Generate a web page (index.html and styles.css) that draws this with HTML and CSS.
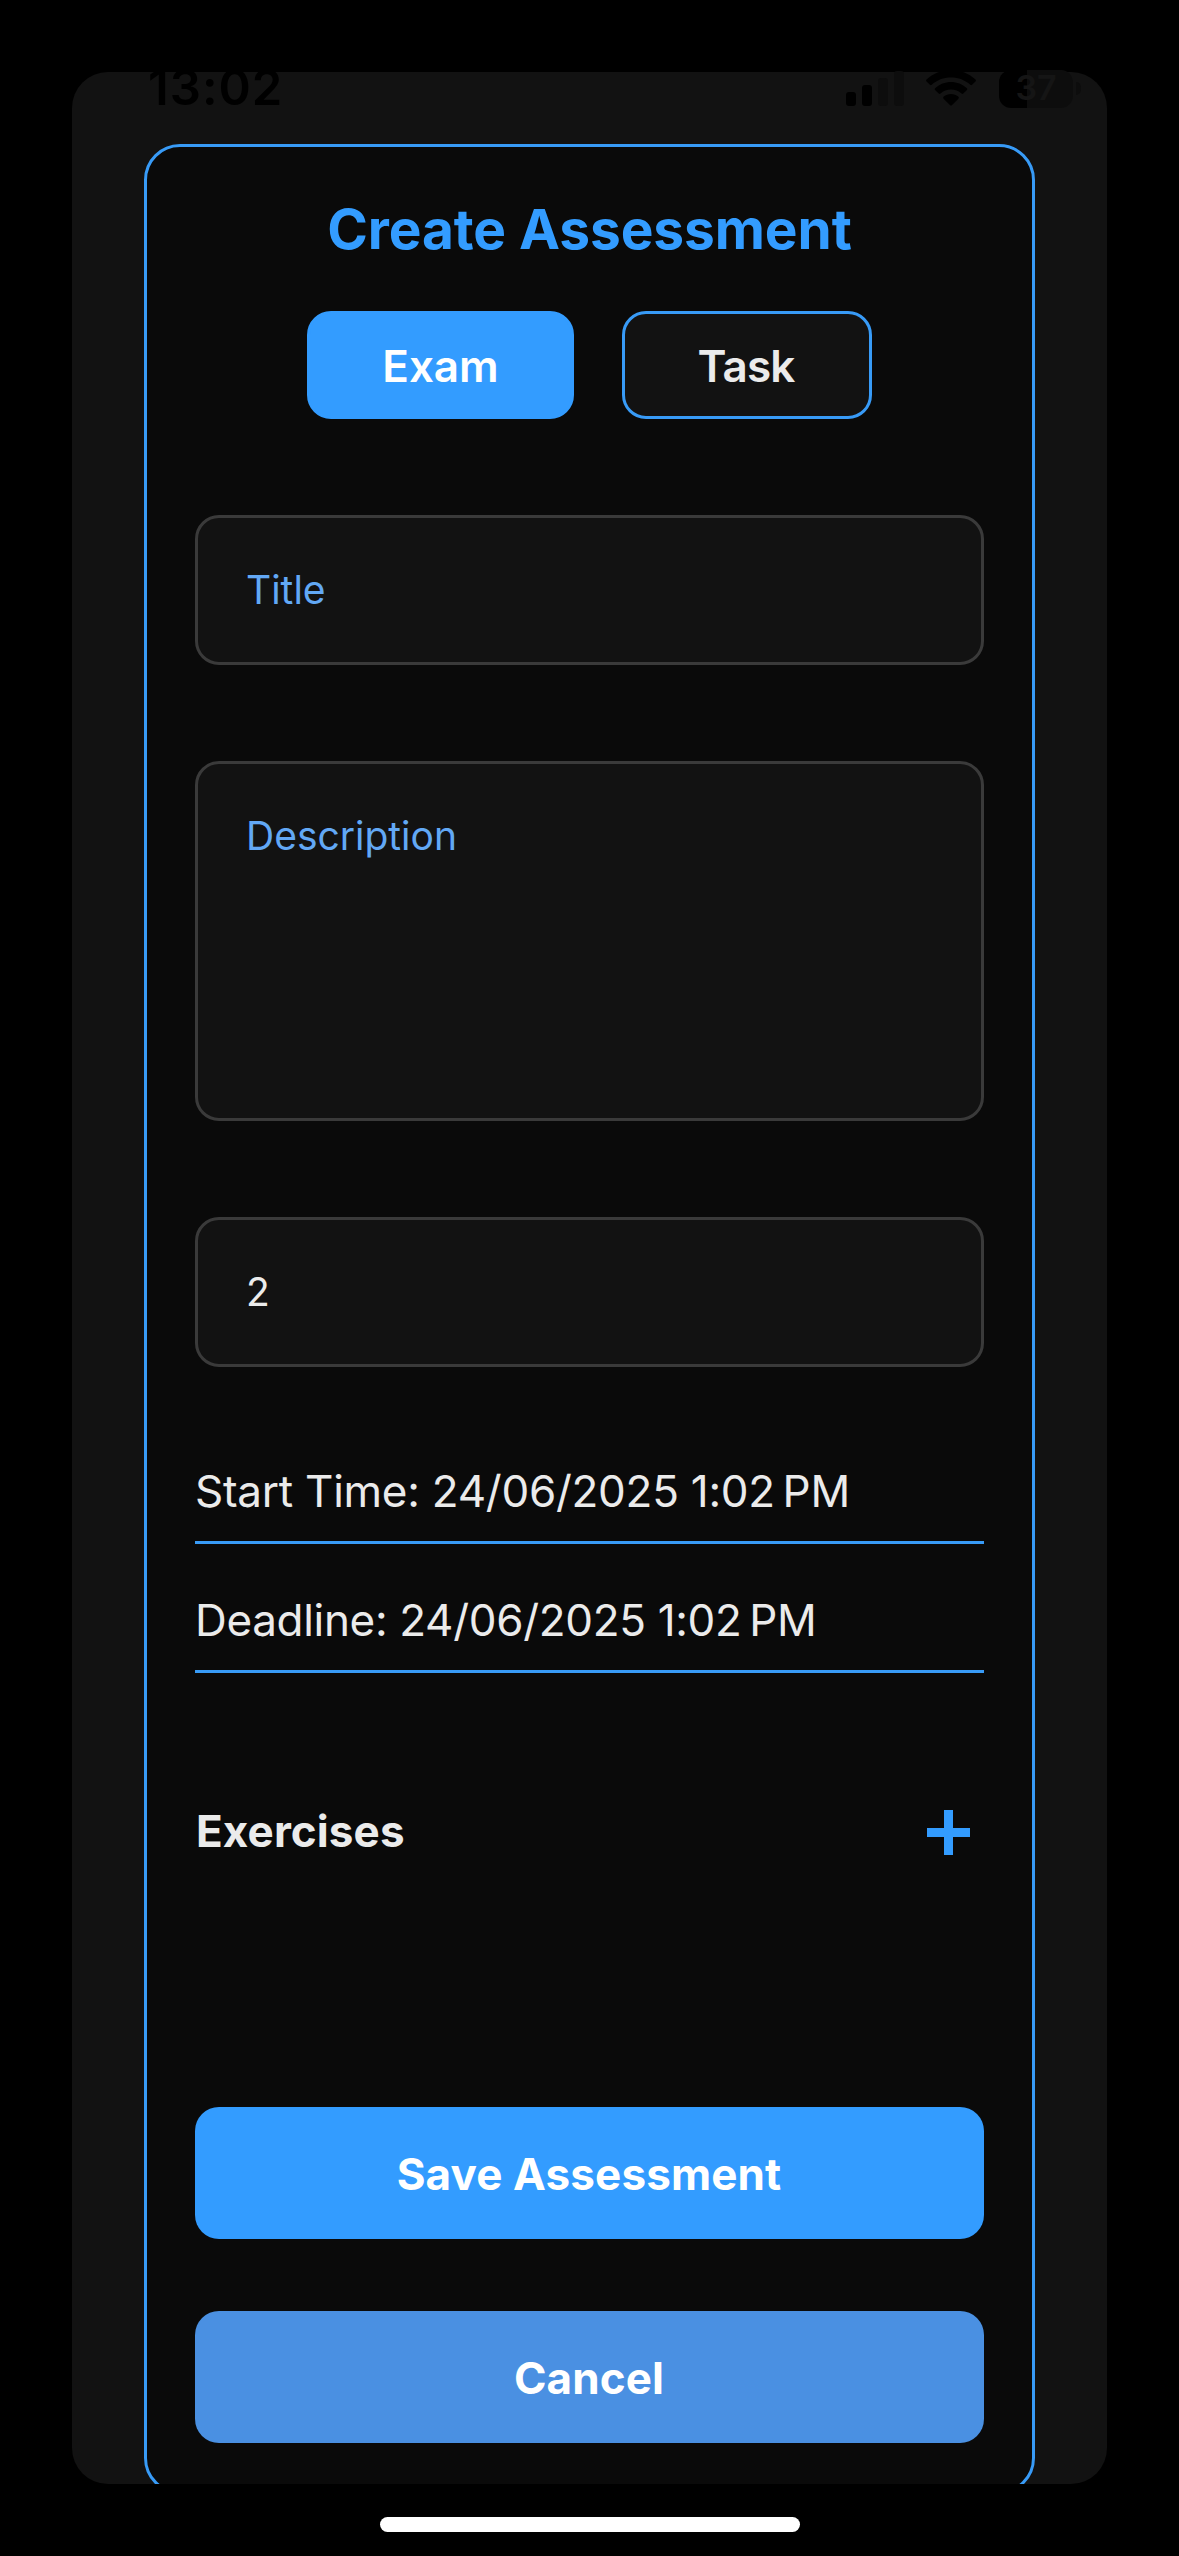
FILE: index.html
```html
<!DOCTYPE html>
<html lang="en">
<head>
<meta charset="utf-8">
<title>Create Assessment</title>
<link rel="stylesheet" href="styles.css">
</head>
<body>
<div class="screen">
  <main class="modal">
    <form class="card">
      <h1 class="heading">Create Assessment</h1>
      <div class="types">
        <button type="button" class="type type-active">Exam</button>
        <button type="button" class="type type-task">Task</button>
      </div>
      <div class="field placeholder">Title</div>
      <div class="field field-area placeholder">Description</div>
      <div class="field">2</div>
      <div class="dates">
        <div class="date">Start Time: 24/06/2025 1:02&#8239;PM</div>
        <div class="date date-deadline">Deadline: 24/06/2025 1:02&#8239;PM</div>
      </div>
      <div class="exercises">
        <h2 class="subheading">Exercises</h2>
        <svg class="plus" viewBox="0 0 43 45" aria-label="Add exercise"><path d="M17 0h9v18h17v9H26v18h-9V27H0v-9h17z"/></svg>
      </div>
      <div class="actions">
        <button type="button" class="action">Save Assessment</button>
        <button type="button" class="action action-cancel">Cancel</button>
      </div>
    </form>
  </main>
  <header class="status">
    <span class="time">13:02</span>
    <div class="indicators">
      <svg class="signal" viewBox="0 0 60 36">
        <rect x="0" y="22" width="10" height="14" rx="3"/>
        <rect x="16" y="15" width="10" height="21" rx="3"/>
        <rect class="dim" x="32" y="8" width="10" height="28" rx="3"/>
        <rect class="dim" x="48" y="1" width="10" height="35" rx="3"/>
      </svg>
      <svg class="wifi" viewBox="0 0 50 36">
        <path d="M25 0C15.500 0 6.800 3.600.500 9.600q-.800.900 0 1.800l3.400 3.400q.900.800 1.800 0C10.900 10 17.600 7.500 25 7.500s14.100 2.500 19.300 7.300q.900.800 1.800 0l3.400-3.400q.800-.900 0-1.800C43.200 3.600 34.500 0 25 0z"/>
        <path d="M25 12c-6 0-11.500 2.300-15.600 6-.900.800-.900 1.400-.100 2.200l3.400 3.300q.900.800 1.800 0c2.800-2.500 6.500-4 10.500-4s7.700 1.500 10.500 4q.900.800 1.800 0l3.400-3.300c.800-.800.800-1.400-.100-2.200C36.500 14.300 31 12 25 12z"/>
        <path d="M25 24c-2.800 0-5.300 1-7.200 2.600-.900.800-.800 1.500 0 2.300l6.100 6.200q1.100 1 2.200 0l6.100-6.200c.800-.8.900-1.500 0-2.300C30.300 25 27.800 24 25 24z"/>
      </svg>
      <div class="battery"><span class="level">37</span></div>
      <span class="nub"></span>
    </div>
  </header>
  <div class="home"></div>
</div>
</body>
</html>
```
FILE: styles.css
```css
* { box-sizing: border-box; }

body {
  margin: 0;
  background: #000;
  font-family: Inter, "Liberation Sans", sans-serif;
  color: #ebebeb;
}

.screen {
  position: relative;
  width: 1179px;
  height: 2556px;
  padding: 72px;
  overflow: hidden;
  background: #000;
}

.modal {
  height: 2412px;
  padding: 72px;
  overflow: hidden;
  border-radius: 36px;
  background: #121212;
}

.card {
  display: flex;
  flex-direction: column;
  width: 891px;
  height: 2350px;
  padding: 48px;
  border: 3px solid #389bf7;
  border-radius: 36px;
  background: #0a0a0a;
}

.heading {
  margin: 0;
  font-size: 55px;
  line-height: 68px;
  font-weight: 700;
  letter-spacing: -0.1px;
  text-align: center;
  color: #339cff;
}

.types {
  display: flex;
  justify-content: center;
  gap: 48px;
  margin-top: 48px;
}

.type {
  width: 250px;
  height: 108px;
  padding: 1px 0 0;
  border: 3px solid #389bf7;
  border-radius: 24px;
  background: #121212;
  font: 600 44px/54px Inter, "Liberation Sans", sans-serif;
  color: #ebebeb;
}

.type-active {
  width: 267px;
  border-color: #339cff;
  background: #339cff;
  color: #fff;
}

.type-task { padding-right: 2px; letter-spacing: -0.8px; }

.field {
  height: 150px;
  margin-top: 96px;
  padding: 47px 48px;
  border: 3px solid #3a3a3a;
  border-radius: 24px;
  background: #121212;
  font-size: 39px;
  line-height: 50px;
}

.field-area { height: 360px; }

.placeholder { color: #62a8f5; }

.dates {
  display: flex;
  flex-direction: column;
  gap: 49px;
  margin-top: 97px;
}

.date {
  padding-bottom: 23px;
  border-bottom: 3px solid #389bf7;
  font-size: 44px;
  line-height: 54px;
  letter-spacing: -0.26px;
  white-space: nowrap;
}

.date-deadline { letter-spacing: -0.32px; }

.exercises {
  display: flex;
  justify-content: space-between;
  height: 55px;
  margin-top: 132px;
  padding: 0 14px 0 1px;
}

.subheading {
  margin: 0;
  font-size: 44px;
  line-height: 52px;
  font-weight: 700;
  letter-spacing: 0.1px;
}

.plus {
  width: 43px;
  height: 45px;
  margin-top: 5px;
  fill: #339cff;
}

.actions {
  display: flex;
  flex-direction: column;
  gap: 72px;
  margin-top: 247px;
}

.action {
  height: 132px;
  padding: 1px 1px 0 0;
  border: 0;
  border-radius: 24px;
  background: #339cff;
  font: 700 44px/54px Inter, "Liberation Sans", sans-serif;
  letter-spacing: 0.12px;
  color: #fff;
}

.action-cancel { background: #4a90e2; }

/* System status bar, floating above the modal */
.status {
  position: absolute;
  top: 58px;
  left: 148px;
  right: 98px;
  display: flex;
  justify-content: space-between;
  color: #000;
}

.time {
  font-size: 49px;
  line-height: 60px;
  font-weight: 600;
  letter-spacing: 1px;
}

.indicators {
  display: flex;
  align-items: flex-start;
  padding-top: 12px;
}

.signal { width: 60px; height: 36px; margin-right: 20px; }
.wifi { width: 50px; height: 36px; margin-right: 23px; }
.dim { fill: #0d0d0d; }

.battery {
  display: flex;
  justify-content: center;
  width: 74px;
  height: 38px;
  border-radius: 12px;
  background: linear-gradient(to right, #000 28px, #0d0d0d 28px);
}

.level {
  font-size: 34px;
  line-height: 36px;
  font-weight: 600;
  color: #151515;
}

.nub {
  width: 5px;
  height: 13px;
  margin: 12px 0 0 3px;
  border-radius: 0 5px 5px 0;
  background: #0d0d0d;
}

.home {
  position: absolute;
  left: 380px;
  top: 2517px;
  width: 420px;
  height: 15px;
  border-radius: 8px;
  background: #fff;
}
```
